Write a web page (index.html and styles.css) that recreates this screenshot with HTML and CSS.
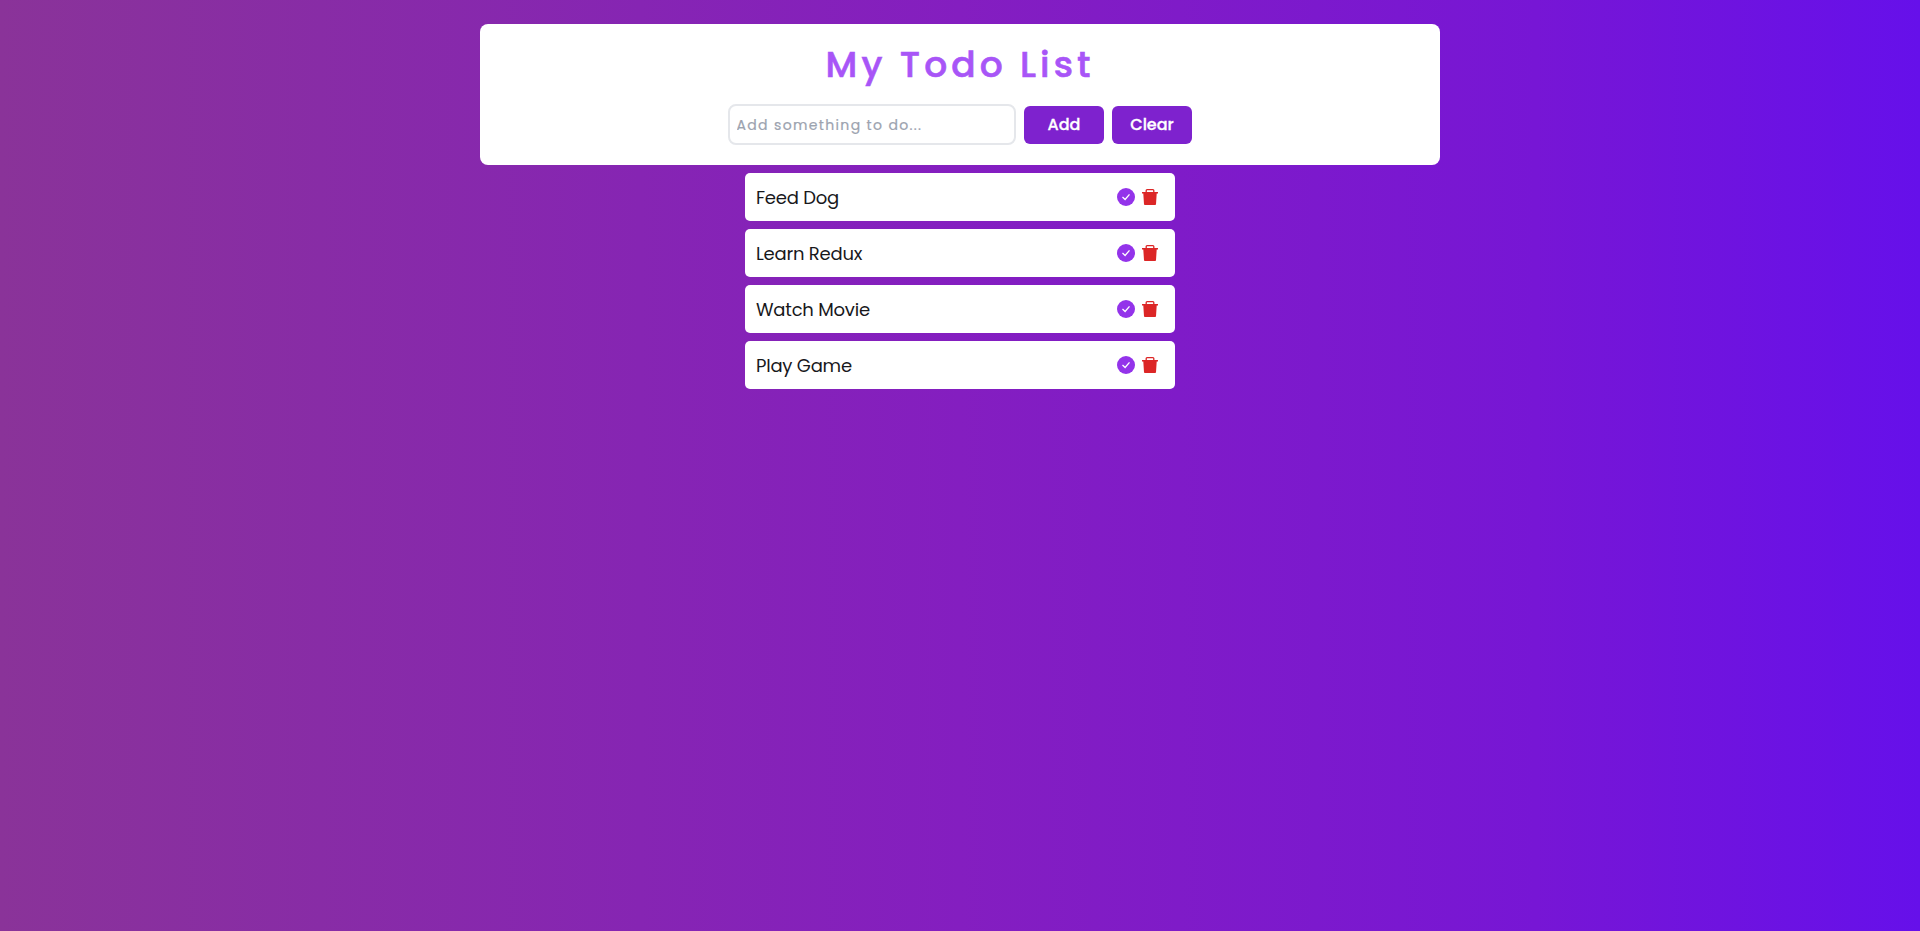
FILE: index.html
```html
<!DOCTYPE html>
<html lang="en">
<head>
<meta charset="utf-8">
<title>My Todo List</title>
<link rel="stylesheet" href="styles.css">
</head>
<body>
<svg class="sprite" aria-hidden="true">
  <symbol id="check" viewBox="0 0 18 18"><circle cx="9" cy="9" r="9" fill="#9333ea"/><path d="M5.500 9 8.100 11.500 12.500 6.300" fill="none" stroke="#fff" stroke-width="1.300"/></symbol>
  <symbol id="trash" viewBox="0 0 16 16"><path d="M0 3h16v1.500h-1.300L14 15.200q-.1.800-.9.800H2.900q-.8 0-.9-.8L1.300 4.500H0z" fill="#dc2626"/><path d="M4.200 3.500V1.600q0-.9.900-.9h5.800q.9 0 .9.900v1.900" fill="none" stroke="#dc2626" stroke-width="1.300"/></symbol>
</svg>
<header class="panel">
  <h1 class="title">My Todo List</h1>
  <form class="form">
    <input class="field" type="text" placeholder="Add something to do...">
    <button class="button" type="button">Add</button>
    <button class="button" type="button">Clear</button>
  </form>
</header>
<ul class="list">
  <li class="item"><span>Feed Dog</span><span class="actions"><svg class="check"><use href="#check"/></svg><svg class="trash"><use href="#trash"/></svg></span></li>
  <li class="item"><span>Learn Redux</span><span class="actions"><svg class="check"><use href="#check"/></svg><svg class="trash"><use href="#trash"/></svg></span></li>
  <li class="item"><span>Watch Movie</span><span class="actions"><svg class="check"><use href="#check"/></svg><svg class="trash"><use href="#trash"/></svg></span></li>
  <li class="item"><span>Play Game</span><span class="actions"><svg class="check"><use href="#check"/></svg><svg class="trash"><use href="#trash"/></svg></span></li>
</ul>
</body>
</html>
```
FILE: styles.css
```css
* { box-sizing: border-box; }
body {
  margin: 0;
  min-height: 100vh;
  padding-top: 24px;
  background: linear-gradient(to right, #8a3399, #841ec0 50%, #7716d5 80%, #6610ea);
  font-family: Poppins, Inter, sans-serif;
}
.sprite { display: none; }
.panel {
  width: 960px;
  height: 141px;
  margin: 0 auto;
  padding-top: 21px;
  background: #fff;
  border-radius: 8px;
}
.title {
  margin: 0;
  color: #a855f7;
  font-size: 36px;
  line-height: 40px;
  font-weight: 500;
  letter-spacing: 4.05px;
  text-align: center;
  -webkit-text-stroke: 0.6px #a855f7;
}
.form {
  display: flex;
  justify-content: center;
  align-items: center;
  gap: 8px;
  margin-top: 19px;
}
.field {
  width: 288px;
  height: 41px;
  padding: 1px 6.5px 0;
  border: 2px solid #e5e7eb;
  border-radius: 8px;
  font: 400 14px Poppins, Inter, sans-serif;
  letter-spacing: 1.35px;
}
.field::placeholder {
  color: #9ca3af;
  opacity: 1;
  -webkit-text-stroke: 0.2px #9ca3af;
}
.button {
  width: 80px;
  height: 38px;
  padding: 0;
  border: 0;
  border-radius: 6px;
  background: #7e22ce;
  color: #fff;
  font: 500 16px Poppins, Inter, sans-serif;
  -webkit-text-stroke: 0.3px #fff;
}
.list {
  display: flex;
  flex-direction: column;
  gap: 8px;
  width: 430px;
  margin: 8px auto 0;
  padding: 0;
  list-style: none;
}
.item {
  display: flex;
  justify-content: space-between;
  align-items: center;
  height: 48px;
  padding: 0 17px 0 11px;
  border-radius: 5px;
  background: #fff;
  color: #18181b;
  font-size: 18px;
  letter-spacing: -0.22px;
}
.actions { display: flex; align-items: center; gap: 7px; }
.check { width: 18px; height: 18px; }
.trash { width: 16px; height: 16px; }
```
